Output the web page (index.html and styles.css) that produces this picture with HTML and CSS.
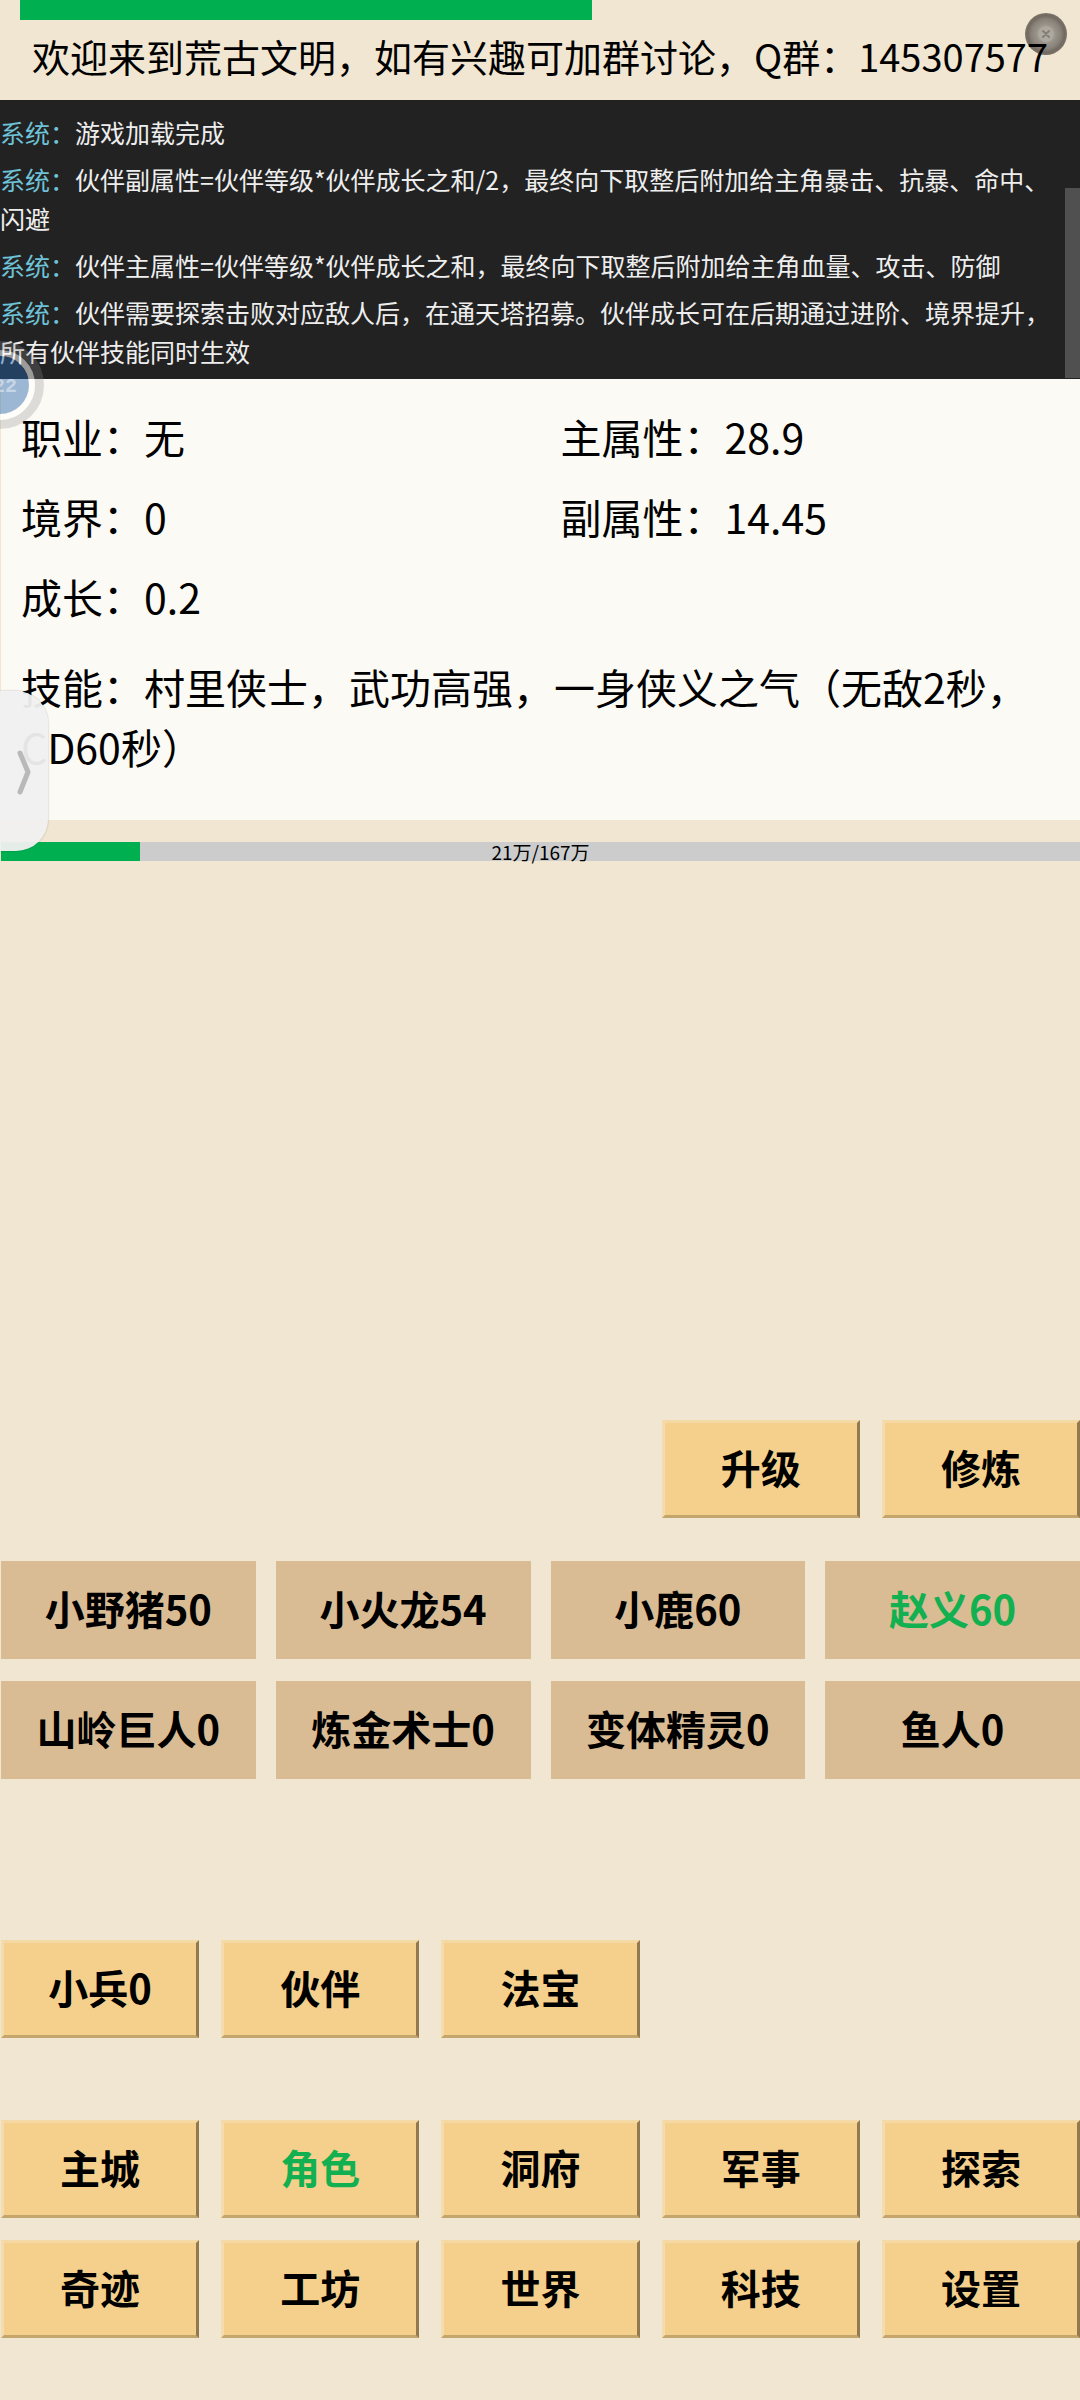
FILE: index.html
```html
<!DOCTYPE html>
<html lang="zh-CN">
<head>
<meta charset="utf-8">
<meta name="viewport" content="width=device-width, initial-scale=1">
<title>荒古文明</title>
<link rel="stylesheet" href="styles.css">
</head>
<body>
<header class="header">
  <div class="top-bar"><div class="top-fill" style="width: 54%"></div></div>
  <svg class="dot" viewBox="0 0 42 42" aria-hidden="true">
    <defs>
      <radialGradient id="dot-shade">
        <stop offset="0" stop-color="#b3aea5"/>
        <stop offset="0.35" stop-color="#aca79e"/>
        <stop offset="0.42" stop-color="#9b958b"/>
        <stop offset="0.7" stop-color="#88827a"/>
        <stop offset="0.88" stop-color="#726a60"/>
        <stop offset="1" stop-color="#7d756a"/>
      </radialGradient>
    </defs>
    <circle cx="21" cy="21" r="21" fill="url(#dot-shade)"/>
    <path d="M18 18l6 6M24 18l-6 6" stroke="#847e76" stroke-width="2" stroke-linecap="round"/>
  </svg>
  <h1 class="title">欢迎来到荒古文明，如有兴趣可加群讨论，Q群：145307577</h1>
</header>

<section class="log">
  <p><span class="who">系统：</span>游戏加载完成</p>
  <p><span class="who">系统：</span>伙伴副属性=伙伴等级*伙伴成长之和/2，最终向下取整后附加给主角暴击、抗暴、命中、闪避</p>
  <p><span class="who">系统：</span>伙伴主属性=伙伴等级*伙伴成长之和，最终向下取整后附加给主角血量、攻击、防御</p>
  <p><span class="who">系统：</span>伙伴需要探索击败对应敌人后，在通天塔招募。伙伴成长可在后期通过进阶、境界提升，所有伙伴技能同时生效</p>
</section>

<main class="main">
  <section class="panel">
    <div class="stats">
      <div>职业：无</div>
      <div>主属性：28.9</div>
      <div>境界：0</div>
      <div>副属性：14.45</div>
      <div>成长：0.2</div>
    </div>
    <p class="skill">技能：村里侠士，武功高强，一身侠义之气（无敌2秒，CD60秒）</p>
    <svg class="ball" viewBox="0 0 44 88" aria-hidden="true">
      <circle cx="0" cy="44" r="39.5" fill="none" stroke="#8c8c8c" stroke-opacity="0.28" stroke-width="9"/>
      <circle cx="0" cy="44" r="32" fill="none" stroke="#fff" stroke-opacity="0.55" stroke-width="6"/>
      <circle cx="0" cy="44" r="29" fill="#2966ac" fill-opacity="0.45"/>
      <text class="ball-text" x="-7" y="51">22</text>
    </svg>
    <button class="handle" type="button" aria-label="展开">
      <svg viewBox="0 0 48 160" aria-hidden="true"><path d="M20 62L28 81L20 101" fill="none" stroke="#b9b9b9" stroke-width="5" stroke-linecap="round" stroke-linejoin="round"/></svg>
    </button>
  </section>

  <div class="exp">
    <div class="exp-fill" style="width: 12.9%"></div>
    <span class="exp-text">21万/167万</span>
  </div>

  <div class="controls">
    <div class="grid actions">
      <button class="btn first-action" type="button">升级</button>
      <button class="btn" type="button">修炼</button>
    </div>
    <div class="partners">
      <button class="tag" type="button">小野猪50</button>
      <button class="tag" type="button">小火龙54</button>
      <button class="tag" type="button">小鹿60</button>
      <button class="tag active" type="button">赵义60</button>
      <button class="tag" type="button">山岭巨人0</button>
      <button class="tag" type="button">炼金术士0</button>
      <button class="tag" type="button">变体精灵0</button>
      <button class="tag" type="button">鱼人0</button>
    </div>
    <div class="grid tabs">
      <button class="btn" type="button">小兵0</button>
      <button class="btn" type="button">伙伴</button>
      <button class="btn" type="button">法宝</button>
    </div>
    <nav class="grid">
      <button class="btn" type="button">主城</button>
      <button class="btn active" type="button">角色</button>
      <button class="btn" type="button">洞府</button>
      <button class="btn" type="button">军事</button>
      <button class="btn" type="button">探索</button>
      <button class="btn" type="button">奇迹</button>
      <button class="btn" type="button">工坊</button>
      <button class="btn" type="button">世界</button>
      <button class="btn" type="button">科技</button>
      <button class="btn" type="button">设置</button>
    </nav>
  </div>
</main>
</body>
</html>
```
FILE: styles.css
```css
* {
  box-sizing: border-box;
}

body {
  margin: 0;
  min-height: 100vh;
  display: flex;
  flex-direction: column;
  background: #f0e6d2;
  color: #000;
  font-family: "Noto Sans CJK SC", sans-serif;
}

p,
h1 {
  margin: 0;
}

/* Header */
.header {
  position: relative;
  padding-bottom: 24px;
}

.top-bar {
  height: 20px;
  padding-left: 20px;
}

.top-fill {
  height: 100%;
  background: #00b050;
}

.title {
  position: relative;
  padding-top: 16px;
  font-size: 38px;
  font-weight: 400;
  line-height: 40px;
  text-align: center;
}

.dot {
  position: absolute;
  top: 13px;
  right: 13px;
  width: 42px;
  height: 42px;
}

/* System log */
.log {
  position: relative;
  display: flex;
  flex-direction: column;
  gap: 8px;
  padding: 13px 15px 8px 0;
  background: #222;
  color: #eee;
  font-size: 25px;
  line-height: 39px;
}

.log::after {
  content: "";
  position: absolute;
  right: 0;
  bottom: 1px;
  width: 15px;
  height: 68%;
  background: #505050;
}

.who {
  color: #6fc3d8;
}

/* Character panel */
.main {
  flex: 1;
  display: flex;
  flex-direction: column;
  padding: 0 0 62px 1px;
}

.panel {
  position: relative;
  padding: 17px 20px 44px;
  background: #fcfaf4;
  font-size: 41px;
}

.stats {
  display: grid;
  grid-template-columns: 1fr 1fr;
  column-gap: 40px;
  line-height: 80px;
}

.skill {
  padding-top: 20px;
  line-height: 60px;
}

.ball {
  position: absolute;
  left: -1px;
  top: -38px;
  width: 44px;
  height: 88px;
}

.ball-text {
  font: bold 20px "Liberation Mono", monospace;
  fill: #fff;
  fill-opacity: 0.45;
}

.handle {
  position: absolute;
  left: -1px;
  bottom: -31px;
  width: 48px;
  height: 160px;
  padding: 0;
  border: 0;
  border-radius: 0 32px 32px 0;
  background: rgba(240, 240, 240, 0.95);
  box-shadow: 0 0 2px rgba(0, 0, 0, 0.3);
}

.handle svg {
  display: block;
}

/* Experience bar */
.exp {
  display: grid;
  height: 19px;
  margin-top: 22px;
  background: #ccc;
}

.exp-fill,
.exp-text {
  grid-area: 1 / 1;
}

.exp-fill {
  background: #00b050;
}

.exp-text {
  font-size: 19px;
  line-height: 19px;
  text-align: center;
}

/* Buttons */
.controls {
  margin-top: auto;
}

.grid {
  display: grid;
  grid-template-columns: repeat(5, 1fr);
  gap: 22px;
}

.first-action {
  grid-column: 4;
}

.partners {
  display: grid;
  grid-template-columns: repeat(4, 1fr);
  gap: 22px 20px;
  margin-top: 43px;
}

.tabs {
  margin: 161px 0 82px;
}

.btn,
.tag {
  height: 98px;
  padding: 0 0 5px;
  color: #000;
  font-family: inherit;
  font-size: 40px;
  font-weight: 700;
  line-height: 60px;
  white-space: nowrap;
}

.btn {
  border: 3px solid;
  border-color: #f4d9a4 #93794e #c4a56c #f4dcae;
  background: #f5d08c;
}

.tag {
  border: 0;
  background: #dabc94;
}

.btn.active,
.tag.active {
  color: #12b050;
}
```
